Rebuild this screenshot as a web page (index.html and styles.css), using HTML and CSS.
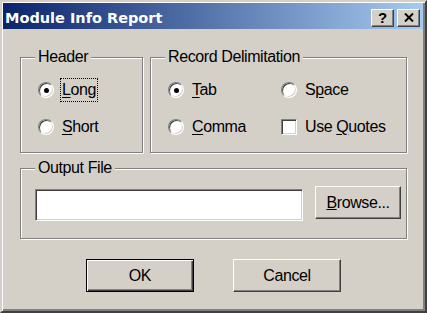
FILE: index.html
```html
<!DOCTYPE html>
<html lang="en">
<head>
  <meta charset="UTF-8" />
  <title>Module Info Report</title>
  <link rel="stylesheet" href="styles.css">
</head>
<body>
  <div class="window">
    <div class="titlebar">
      <span class="title">Module Info Report</span>
      <div class="caption-buttons">
        <button type="button" class="cap-btn">?</button>
        <button type="button" class="cap-btn">
          <svg width="10" height="9" viewBox="0 0 10 9"><path d="M1 0.5 L9 8.5 M9 0.5 L1 8.5" stroke="#000" stroke-width="2" fill="none"/></svg>
        </button>
      </div>
    </div>

    <div class="dialog">
      <div class="top-row">
        <fieldset class="group header-group">
          <legend>Header</legend>
          <div class="opt-list">
            <label class="opt"><span class="radio checked"></span><span class="opt-text focus"><u>L</u>ong</span></label>
            <label class="opt"><span class="radio"></span><span class="opt-text"><u>S</u>hort</span></label>
          </div>
        </fieldset>

        <fieldset class="group delim-group">
          <legend>Record Delimitation</legend>
          <div class="opt-grid">
            <label class="opt"><span class="radio checked"></span><span class="opt-text"><u>T</u>ab</span></label>
            <label class="opt"><span class="radio"></span><span class="opt-text">S<u>p</u>ace</span></label>
            <label class="opt"><span class="radio"></span><span class="opt-text"><u>C</u>omma</span></label>
            <label class="opt"><span class="check"></span><span class="opt-text">Use <u>Q</u>uotes</span></label>
          </div>
        </fieldset>
      </div>

      <fieldset class="group output-group">
        <legend>Output File</legend>
        <div class="file-row">
          <input type="text" class="file-input" />
          <button type="button" class="btn browse"><u>B</u>rowse...</button>
        </div>
      </fieldset>

      <div class="actions">
        <button type="button" class="btn default">OK</button>
        <button type="button" class="btn">Cancel</button>
      </div>
    </div>
  </div>
</body>
</html>
```

FILE: styles.css
```css
* { margin: 0; padding: 0; box-sizing: border-box; }
body {
  font-family: "Liberation Sans", Arial, sans-serif;
  font-size: 16px;
  letter-spacing: -0.4px;
  color: #000;
  background: #d4d0c8;
}
.window {
  width: 427px;
  height: 313px;
  border: 2px solid;
  border-color: #d4d0c8 #404040 #404040 #d4d0c8;
  box-shadow: inset 1px 1px #fff, inset -2px -2px #808080;
  padding: 1px 2px 2px 1px;
  background: #d4d0c8;
  display: flex;
  flex-direction: column;
}
.titlebar {
  height: 26px;
  flex-shrink: 0;
  background: linear-gradient(to right, #0a246a, #a6caf0);
  display: flex;
  align-items: center;
  justify-content: space-between;
  padding: 0 3px 0 2px;
}
.title {
  color: #fff;
  font-family: "DejaVu Sans", Verdana, sans-serif;
  font-weight: bold;
  font-size: 14.5px;
  letter-spacing: 0;
  margin-top: 3px;
}
.caption-buttons {
  display: flex;
  gap: 3px;
  margin-top: 3px;
}
.cap-btn {
  width: 23px;
  height: 18px;
  background: #d4d0c8;
  border: 1px solid;
  border-color: #fff #404040 #404040 #fff;
  box-shadow: inset -1px -1px #808080;
  display: flex;
  align-items: center;
  justify-content: center;
  font: bold 15px "Liberation Sans", Arial, sans-serif;
  color: #000;
}
.dialog {
  flex: 1;
  padding: 20px 16px 0 17px;
  display: flex;
  flex-direction: column;
}
.top-row {
  display: flex;
  gap: 7px;
}
.group {
  border: 1px solid #808080;
  box-shadow: inset 1px 1px #fff, 1px 1px #fff;
  padding: 13px 0 13px 14px;
}
.group legend {
  padding: 0 3px;
  line-height: 16px;
  background: #d4d0c8;
}
.header-group { width: 123px; flex-shrink: 0; }
.delim-group { flex: 1; }
.opt-list {
  display: flex;
  flex-direction: column;
  gap: 13px;
  margin-left: 3px;
}
.opt-grid {
  display: grid;
  grid-template-columns: 113px 1fr;
  row-gap: 13px;
  margin-left: 3px;
}
.opt {
  display: flex;
  align-items: center;
  gap: 8px;
  height: 24px;
}
.opt-text { line-height: 24px; }
.opt-text u { text-underline-offset: 2px; }
.focus {
  outline: 1px dotted #000;
  line-height: 22px;
  padding: 0 1px;
  margin-left: -1px;
}
.radio {
  width: 16px;
  height: 16px;
  flex-shrink: 0;
  border-radius: 50%;
  border: 1px solid;
  border-color: #808080 #fff #fff #808080;
  box-shadow: inset 1px 1px #404040, inset -1px -1px #d4d0c8;
  background: #fff;
  display: flex;
  align-items: center;
  justify-content: center;
}
.radio.checked::after {
  content: "";
  width: 5px;
  height: 5px;
  border-radius: 50%;
  background: #000;
}
.check {
  width: 16px;
  height: 16px;
  flex-shrink: 0;
  border: 1px solid;
  border-color: #808080 #fff #fff #808080;
  box-shadow: inset 1px 1px #404040, inset -1px -1px #d4d0c8;
  background: #fff;
}
.output-group {
  margin-top: 7px;
  padding: 10px 5px 17px 14px;
}
.file-row {
  display: flex;
  align-items: flex-start;
  gap: 12px;
}
.file-input {
  flex: 1;
  height: 32px;
  margin-top: 3px;
  border: 1px solid;
  border-color: #808080 #fff #fff #808080;
  box-shadow: inset 1px 1px #404040, inset -1px -1px #d4d0c8;
  background: #fff;
  outline: none;
}
.btn {
  height: 33px;
  background: #d4d0c8;
  border: 1px solid;
  border-color: #fff #404040 #404040 #fff;
  box-shadow: inset -1px -1px #808080;
  font: inherit;
  letter-spacing: inherit;
  color: #000;
}
.browse { width: 86px; }
.actions {
  display: flex;
  justify-content: center;
  gap: 39px;
  margin-top: 20px;
}
.actions .btn { width: 108px; }
.btn.default {
  border: 1px solid #000;
  box-shadow: inset 1px 1px #fff, inset -1px -1px #404040, inset -2px -2px #808080;
}
```
